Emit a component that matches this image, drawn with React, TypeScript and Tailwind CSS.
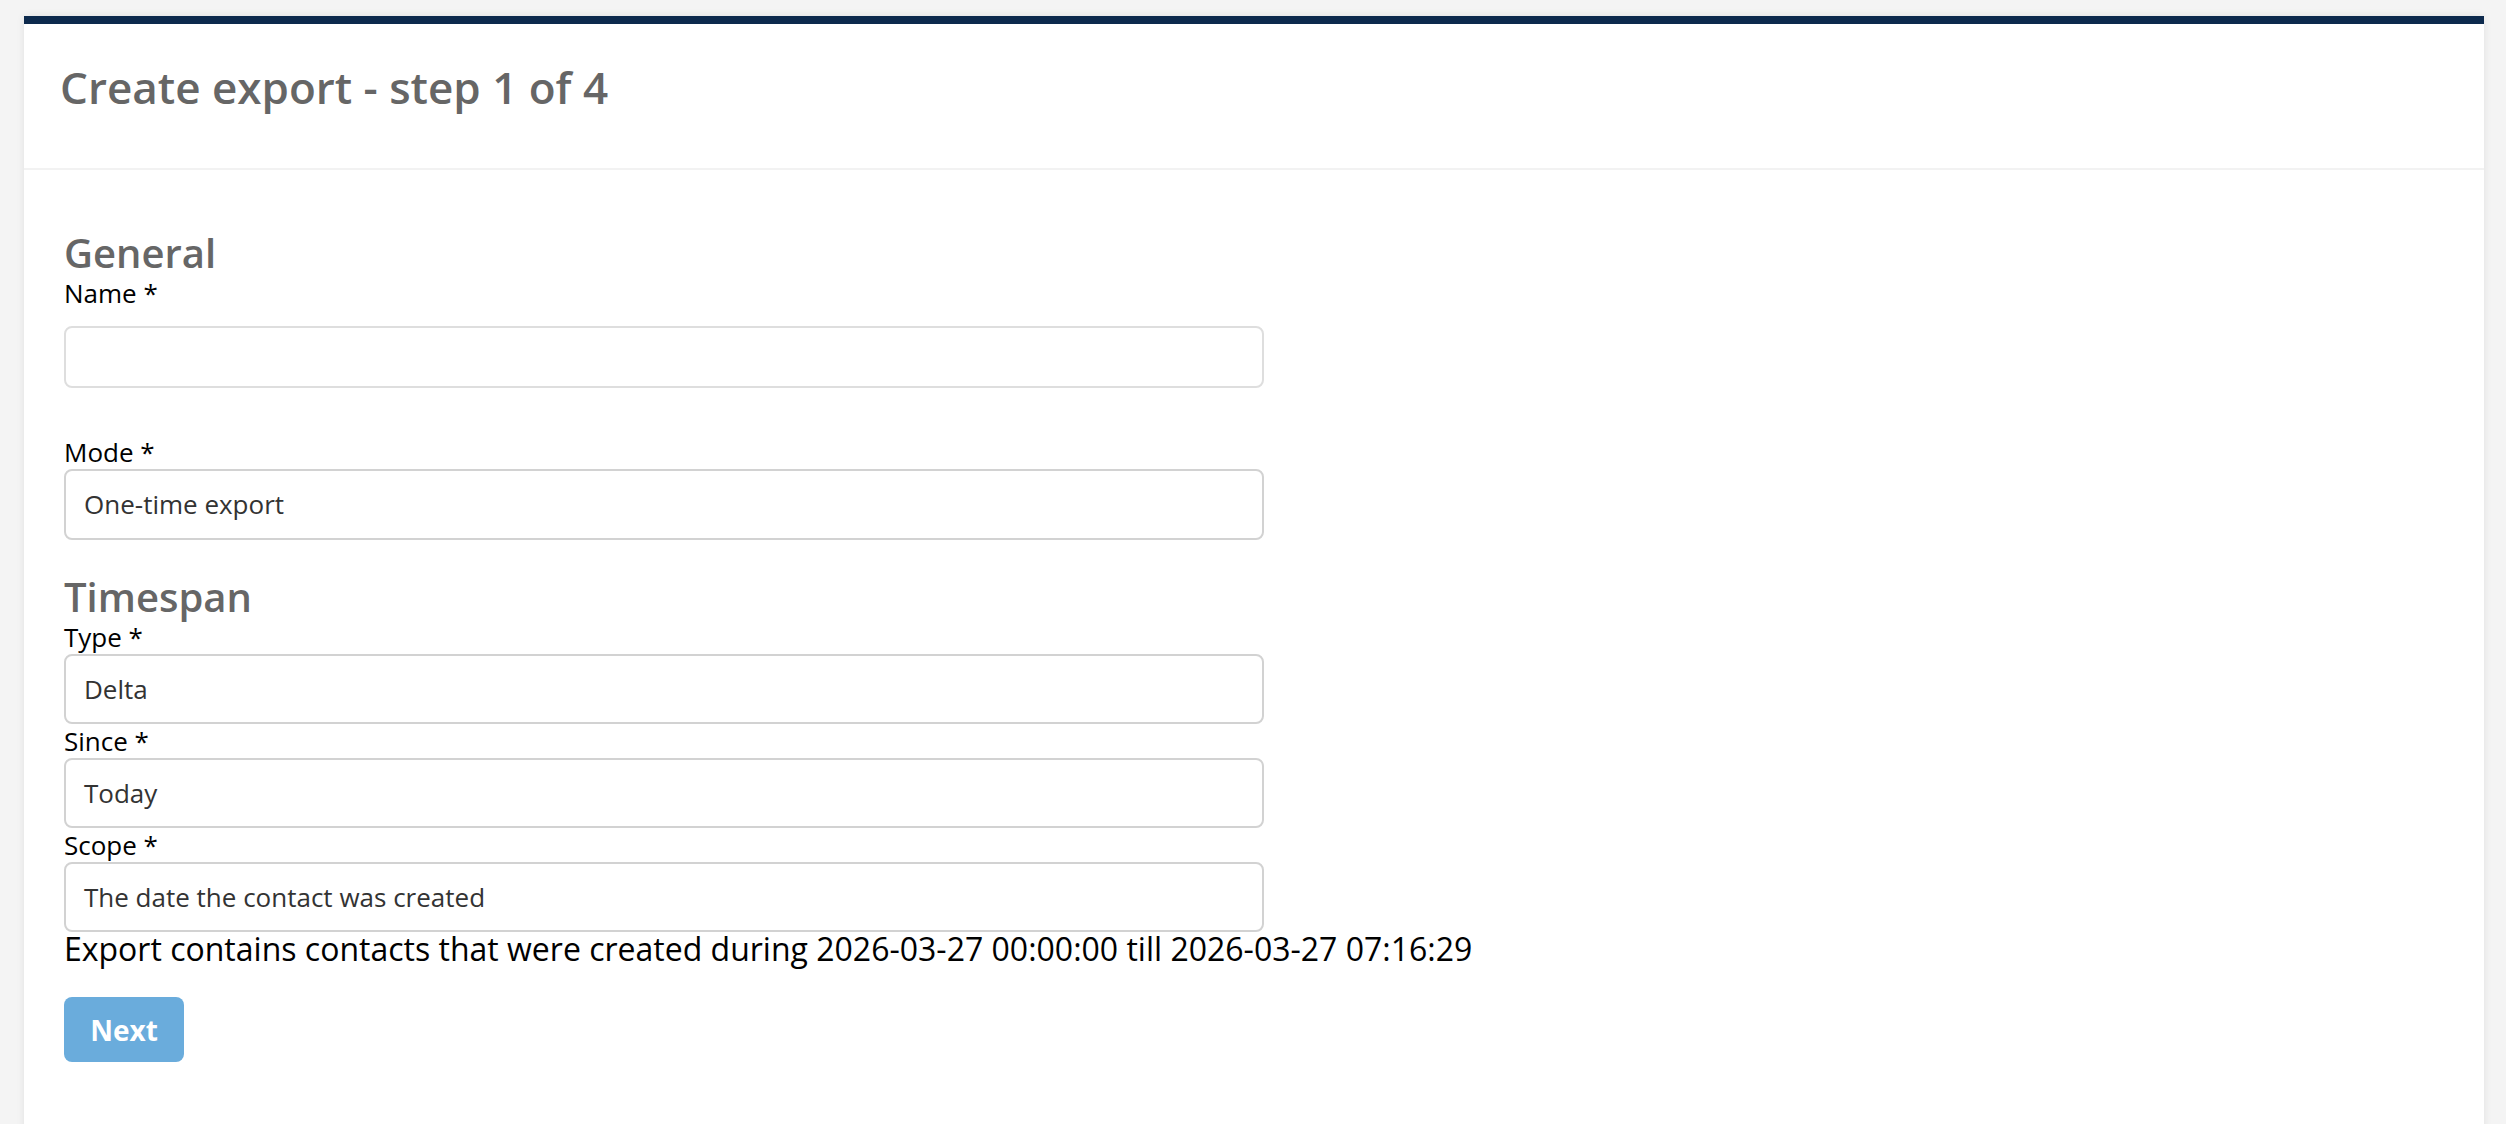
const selects = [
  { label: 'Type *', value: 'Delta' },
  { label: 'Since *', value: 'Today' },
  { label: 'Scope *', value: 'The date the contact was created' },
];

const Label = ({ children }: { children: React.ReactNode }) => (
  <div className="text-[26px] leading-[34px] text-black">{children}</div>
);

const SelectBox = ({ value, h = 'h-[70px]' }: { value: string; h?: string }) => (
  <div className={`${h} w-[1200px] flex items-center pl-[18px] border-2 border-[#d2d2d2] rounded-[8px] bg-white text-[26px] text-[#333]`}>
    {value}
  </div>
);

export default function App() {
  return (
    <div className="min-h-screen bg-[#f4f4f4] pt-[16px] pl-[24px] pr-[22px] font-['Open_Sans',sans-serif] overflow-hidden">
      <div className="bg-white border-t-[8px] border-[#0d2a4d] shadow-[0_0_8px_rgba(0,0,0,0.08)]">
        <div className="pl-[36px] pt-[38px] pb-[56px] border-b-2 border-[#f2f2f2]">
          <h1 className="text-[44px] leading-[50px] font-semibold text-[#666]">Create export - step 1 of 4</h1>
        </div>

        <div className="pl-[40px] pt-[60px] pb-[80px]">
          <h2 className="text-[40px] leading-[46px] font-semibold text-[#666]">General</h2>
          <Label>Name *</Label>
          <input className="mt-[16px] h-[62px] w-[1200px] block border-2 border-[#dedede] rounded-[8px] px-[18px] text-[26px] outline-none" />

          <div className="mt-[47px]">
            <Label>Mode *</Label>
          </div>
          <SelectBox value="One-time export" h="h-[71px]" />

          <h2 className="mt-[34px] text-[40px] leading-[46px] font-semibold text-[#666]">Timespan</h2>
          {selects.map((s) => (
            <div key={s.label}>
              <Label>{s.label}</Label>
              <SelectBox value={s.value} />
            </div>
          ))}

          <p className="text-[32px] leading-[33px] text-black">
            Export contains contacts that were created during 2026-03-27 00:00:00 till 2026-03-27 07:16:29
          </p>

          <button className="mt-[32px] w-[120px] h-[65px] rounded-[8px] bg-[#6aacdc] text-white text-[28px] font-bold">
            Next
          </button>
        </div>
      </div>
    </div>
  );
}
